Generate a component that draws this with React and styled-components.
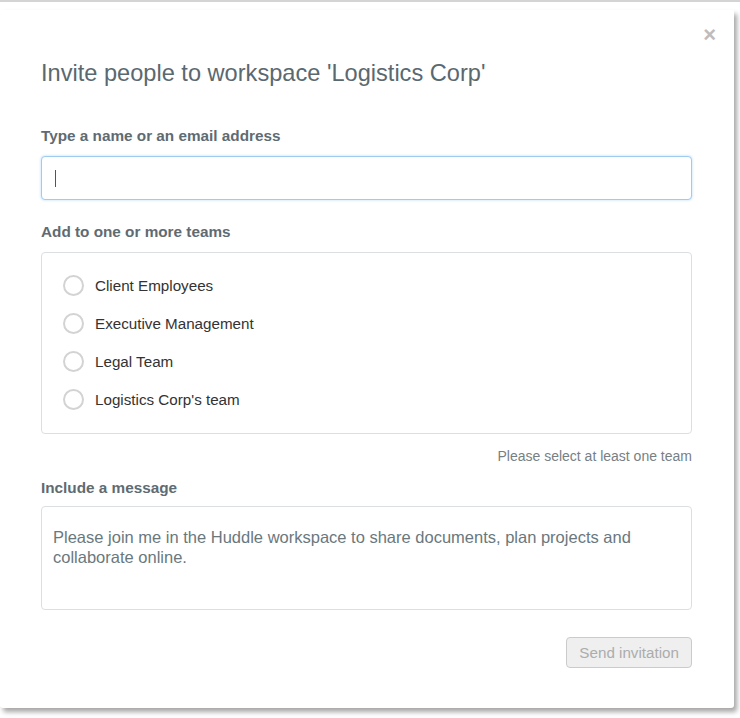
import React from "react";
import styled, { createGlobalStyle } from "styled-components";

const teams = [
  "Client Employees",
  "Executive Management",
  "Legal Team",
  "Logistics Corp's team",
];

function App() {
  return (
    <>
      <GlobalStyle />
      <Page>
        <Modal>
          <Close aria-label="Close">×</Close>
          <Title>Invite people to workspace 'Logistics Corp'</Title>

          <Label>Type a name or an email address</Label>
          <InputWrap>
            <Input type="text" />
            <Caret />
          </InputWrap>

          <Label $top={22}>Add to one or more teams</Label>
          <TeamBox>
            {teams.map((t) => (
              <TeamRow key={t}>
                <Radio />
                <TeamName>{t}</TeamName>
              </TeamRow>
            ))}
          </TeamBox>
          <Hint>Please select at least one team</Hint>

          <Label $top={12}>Include a message</Label>
          <Message defaultValue="Please join me in the Huddle workspace to share documents, plan projects and collaborate online." />

          <Footer>
            <SendButton disabled>Send invitation</SendButton>
          </Footer>
        </Modal>
      </Page>
    </>
  );
}

const GlobalStyle = createGlobalStyle`
  body {
    margin: 0;
    background: #fff;
    font-family: "Liberation Sans", Arial, sans-serif;
  }
  * { box-sizing: border-box; }
`;

const Page = styled.div`
  width: 740px;
  min-height: 718px;
  border-top: 2px solid #d4d4d4;
  padding-top: 8px;
`;

const Modal = styled.div`
  position: relative;
  width: 734px;
  background: #fff;
  padding: 50px 42px 40px 41px;
  box-shadow: 3px 4px 5px rgba(0, 0, 0, 0.35);
  border-radius: 0 0 3px 3px;
`;

const Close = styled.button`
  position: absolute;
  top: 14px;
  right: 18px;
  border: 0;
  background: none;
  padding: 0;
  font-family: "Liberation Sans", Arial, sans-serif;
  font-size: 22px;
  font-weight: bold;
  line-height: 22px;
  color: #bdbdbd;
  cursor: pointer;
`;

const Title = styled.h2`
  margin: 0 0 40px;
  font-size: 23.6px;
  line-height: 26px;
  font-weight: normal;
  color: #5a6870;
`;

const Label = styled.div`
  margin-top: ${(p) => p.$top || 0}px;
  margin-bottom: 10px;
  font-size: 15.3px;
  line-height: 20px;
  font-weight: bold;
  color: #5f6b72;
`;

const InputWrap = styled.div`
  position: relative;
`;

const Input = styled.input`
  display: block;
  width: 100%;
  height: 44px;
  border: 1px solid #9fcbef;
  border-radius: 4px;
  box-shadow: 0 0 3px rgba(102, 175, 233, 0.45);
  padding: 0 13px;
  font-family: "Liberation Sans", Arial, sans-serif;
  font-size: 16px;
  outline: none;
`;

const Caret = styled.span`
  position: absolute;
  left: 14px;
  top: 14px;
  width: 1px;
  height: 17px;
  background: #555;
`;

const TeamBox = styled.div`
  margin-top: 1px;
  border: 1px solid #dcdfe2;
  border-radius: 4px;
  padding: 13px 20px 15px;
`;

const TeamRow = styled.div`
  display: flex;
  align-items: center;
  height: 38px;
`;

const Radio = styled.span`
  width: 21px;
  height: 21px;
  border: 2px solid #d3d3d3;
  border-radius: 50%;
  margin-left: 1px;
  margin-right: 11px;
  flex: none;
`;

const TeamName = styled.span`
  font-size: 15.2px;
  color: #333;
`;

const Hint = styled.div`
  margin-top: 12px;
  text-align: right;
  font-size: 14px;
  line-height: 20px;
  color: #777f84;
`;

const Message = styled.textarea`
  display: block;
  width: 100%;
  height: 104px;
  margin-top: -2px;
  border: 1px solid #dcdfe2;
  border-radius: 4px;
  padding: 20px 11px;
  resize: none;
  font-family: "Liberation Sans", Arial, sans-serif;
  font-size: 16.5px;
  line-height: 20px;
  color: #6a787e;
  outline: none;
`;

const Footer = styled.div`
  display: flex;
  justify-content: flex-end;
  margin-top: 27px;
`;

const SendButton = styled.button`
  height: 31px;
  padding: 0 12px;
  border: 1px solid #cbcbcb;
  border-radius: 4px;
  background: #efefef;
  color: #acacac;
  font-family: "Liberation Sans", Arial, sans-serif;
  font-size: 15.2px;
`;

export default App;
